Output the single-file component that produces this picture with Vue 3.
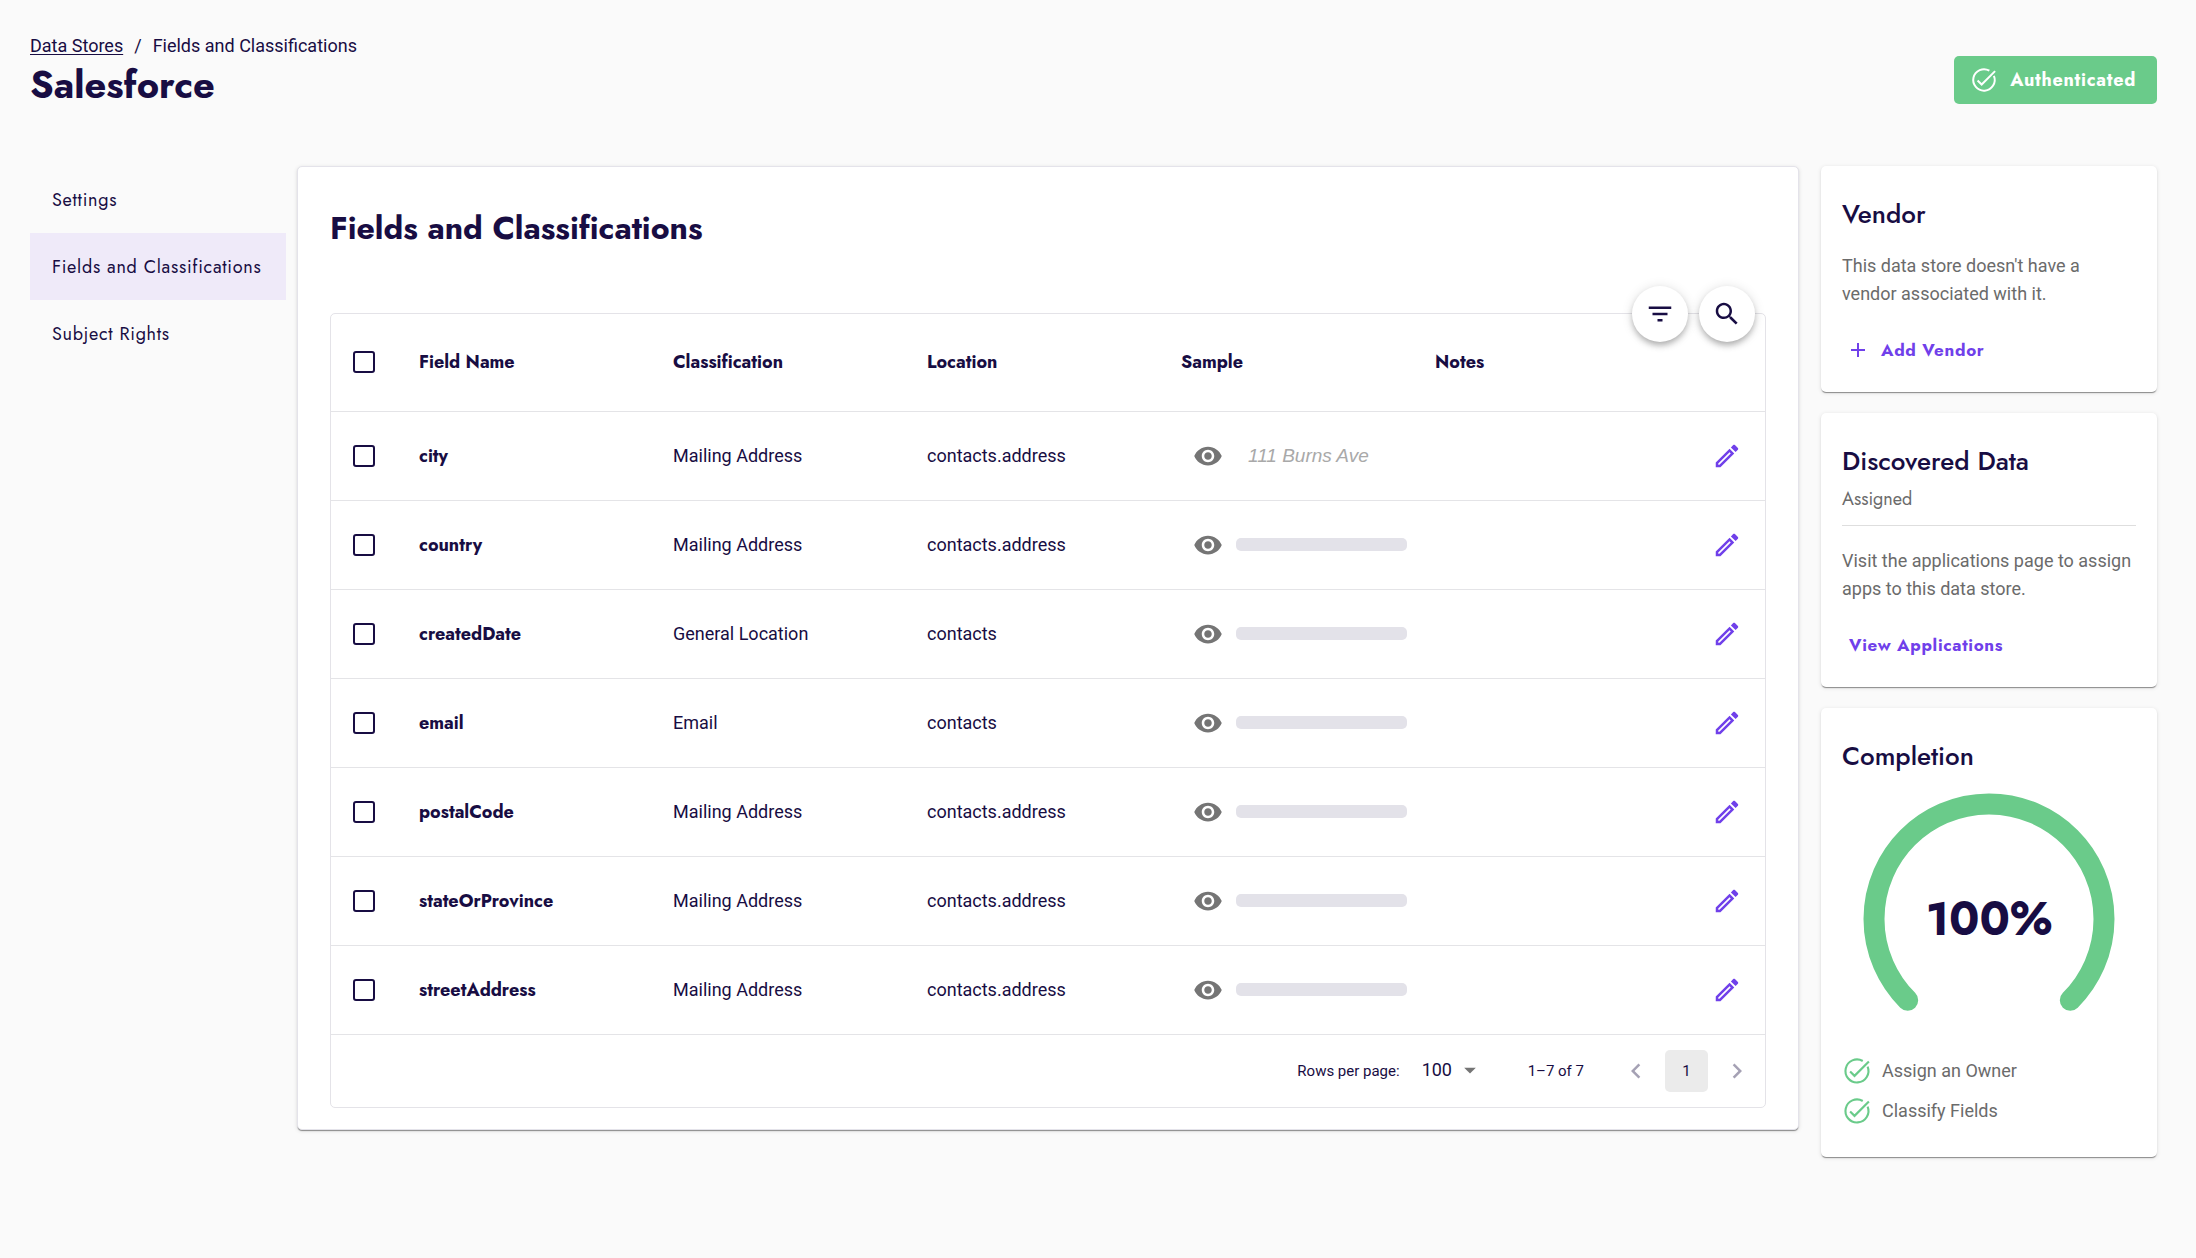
<script setup>
import { ref } from 'vue'

const navItems = ['Settings', 'Fields and Classifications', 'Subject Rights']
const activeItem = 'Fields and Classifications'
const columns = ['Field Name', 'Classification', 'Location', 'Sample', 'Notes']
const rows = ref([
  { name: 'city', classification: 'Mailing Address', location: 'contacts.address', sample: '111 Burns Ave' },
  { name: 'country', classification: 'Mailing Address', location: 'contacts.address' },
  { name: 'createdDate', classification: 'General Location', location: 'contacts' },
  { name: 'email', classification: 'Email', location: 'contacts' },
  { name: 'postalCode', classification: 'Mailing Address', location: 'contacts.address' },
  { name: 'stateOrProvince', classification: 'Mailing Address', location: 'contacts.address' },
  { name: 'streetAddress', classification: 'Mailing Address', location: 'contacts.address' }
])
const tasks = ['Assign an Owner', 'Classify Fields']
const pageSize = ref('100')

const icons = {
  done: 'M16.6 4A9.2 9.2 0 1 0 20.5 8.5M6.500 12.400L10 15.900L21.500 4.400',
  filter: 'M10 18h4v-2h-4v2zM3 6v2h18V6H3zm3 7h12v-2H6v2z',
  search: 'M15.5 14h-.79l-.28-.27C15.41 12.59 16 11.11 16 9.5 16 5.91 13.09 3 9.5 3S3 5.91 3 9.5 5.91 16 9.5 16c1.61 0 3.09-.59 4.23-1.57l.27.28v.79l5 4.99L20.49 19l-4.99-5zm-6 0C7.01 14 5 11.99 5 9.5S7.01 5 9.5 5 14 7.01 14 9.5 11.99 14 9.5 14z',
  eye: 'M12 4.5C7 4.5 2.73 7.61 1 12c1.73 4.39 6 7.5 11 7.5s9.27-3.11 11-7.5c-1.73-4.39-6-7.5-11-7.5zM12 17c-2.76 0-5-2.24-5-5s2.24-5 5-5 5 2.24 5 5-2.24 5-5 5zm0-8c-1.66 0-3 1.34-3 3s1.34 3 3 3 3-1.34 3-3-1.34-3-3-3z',
  edit: 'M3 17.25V21h3.75L17.81 9.94l-3.75-3.75L3 17.25zM5.92 19H5v-.92l9.06-9.06.92.92L5.92 19zM20.71 5.63l-2.34-2.34c-.2-.2-.45-.29-.71-.29s-.51.1-.7.29l-1.83 1.83 3.75 3.75 1.83-1.83c.39-.39.39-1.02 0-1.41z',
  plus: 'M19 13h-6v6h-2v-6H5v-2h6V5h2v6h6v2z',
  drop: 'M7 10l5 5 5-5z',
  prev: 'M15.41 7.41L14 6l-6 6 6 6 1.41-1.41L10.83 12z',
  next: 'M10 6L8.59 7.41 13.17 12l-4.58 4.59L10 18l6-6z'
}
</script>

<template>
  <div class="page">
    <header class="page-header">
      <div>
        <nav class="breadcrumb" aria-label="Breadcrumb">
          <a href="#">Data Stores</a><span class="slash">/</span><span>Fields and Classifications</span>
        </nav>
        <h1>Salesforce</h1>
      </div>
      <button class="auth" type="button">
        <svg class="done" viewBox="0 0 24 24"><path :d="icons.done" /></svg>
        Authenticated
      </button>
    </header>

    <div class="layout">
      <nav class="side-nav" aria-label="Data store">
        <a v-for="item in navItems" :key="item" href="#" :class="{ active: item === activeItem }">{{ item }}</a>
      </nav>

      <main class="panel">
        <h2>Fields and Classifications</h2>
        <div class="grid">
          <div class="fabs">
            <button type="button" aria-label="Filter"><svg viewBox="0 0 24 24"><path :d="icons.filter" /></svg></button>
            <button type="button" aria-label="Search"><svg viewBox="0 0 24 24"><path :d="icons.search" /></svg></button>
          </div>
          <table>
            <colgroup>
              <col class="col-check" />
              <col v-for="c in columns" :key="c" />
              <col class="col-edit" />
            </colgroup>
            <thead>
              <tr>
                <th><input type="checkbox" aria-label="Select all" /></th>
                <th v-for="c in columns" :key="c" scope="col">{{ c }}</th>
                <th></th>
              </tr>
            </thead>
            <tbody>
              <tr v-for="row in rows" :key="row.name">
                <td><input type="checkbox" :aria-label="'Select ' + row.name" /></td>
                <th scope="row">{{ row.name }}</th>
                <td>{{ row.classification }}</td>
                <td>{{ row.location }}</td>
                <td>
                  <div class="sample">
                    <button class="icon-button" type="button" aria-label="Show sample"><svg viewBox="0 0 24 24"><path :d="icons.eye" /></svg></button>
                    <em v-if="row.sample">{{ row.sample }}</em>
                    <span v-else class="mask"></span>
                  </div>
                </td>
                <td></td>
                <td class="edit-cell">
                  <button class="icon-button" type="button" aria-label="Edit"><svg viewBox="0 0 24 24"><path :d="icons.edit" /></svg></button>
                </td>
              </tr>
            </tbody>
          </table>
          <div class="pager">
            <label for="page-size">Rows per page:</label>
            <div class="select">
              <select id="page-size" v-model="pageSize"><option>100</option></select>
              <svg viewBox="0 0 24 24"><path :d="icons.drop" /></svg>
            </div>
            <span class="range">1–7 of 7</span>
            <button class="arrow" type="button" aria-label="Previous page"><svg viewBox="0 0 24 24"><path :d="icons.prev" /></svg></button>
            <button class="current" type="button">1</button>
            <button class="arrow" type="button" aria-label="Next page"><svg viewBox="0 0 24 24"><path :d="icons.next" /></svg></button>
          </div>
        </div>
      </main>

      <aside>
        <section class="card">
          <h3>Vendor</h3>
          <p>This data store doesn't have a vendor associated with it.</p>
          <button class="text-button with-icon" type="button">
            <svg viewBox="0 0 24 24"><path :d="icons.plus" /></svg>
            Add Vendor
          </button>
        </section>
        <section class="card">
          <h3 class="tight">Discovered Data</h3>
          <div class="subtitle">Assigned</div>
          <p>Visit the applications page to assign apps to this data store.</p>
          <a class="text-button" href="#">View Applications</a>
        </section>
        <section class="card completion">
          <h3 class="tight">Completion</h3>
          <div class="gauge">
            <svg viewBox="0 0 252 220">
              <path d="M44.700 207.300A115 115 0 1 1 207.300 207.300" />
            </svg>
            <strong>100%</strong>
          </div>
          <ul>
            <li v-for="task in tasks" :key="task">
              <svg class="done" viewBox="0 0 24 24"><path :d="icons.done" /></svg>{{ task }}
            </li>
          </ul>
        </section>
      </aside>
    </div>
  </div>
</template>

<style>
body {
  background: #fafafa;
}
</style>

<style scoped>
* {
  box-sizing: border-box;
}
.page {
  padding: 32px 39px 32px 30px;
  color: #180d43;
  font: 18px/28px Roboto, sans-serif;
}
h1, h2, h3, p, ul {
  margin: 0;
  padding: 0;
}
h1, h2, h3, th, .side-nav, .subtitle, .gauge {
  font-family: Jost, Lato, sans-serif;
}
svg {
  display: block;
  fill: currentColor;
  flex: none;
}
.done {
  fill: none;
  stroke: currentColor;
  stroke-width: 1.7;
}
button {
  border: 0;
  padding: 0;
  background: none;
  color: inherit;
  font: inherit;
}
.page-header {
  display: flex;
  justify-content: space-between;
  align-items: flex-start;
  height: 134px;
}
.breadcrumb a {
  color: inherit;
  text-underline-offset: 2px;
}
.slash {
  margin: 0 11px;
}
h1 {
  font-size: 38px;
  line-height: 50px;
}
.auth {
  display: flex;
  align-items: center;
  gap: 12px;
  height: 48px;
  margin-top: 24px;
  padding: 0 21px 0 16px;
  border-radius: 5px;
  background: #6acb8a;
  color: #fff;
  font-family: Jost, Lato, sans-serif;
  font-size: 18px;
  font-weight: 700;
  letter-spacing: 0.04em;
}
.auth svg {
  width: 28px;
  height: 28px;
}
.layout {
  display: flex;
  align-items: flex-start;
}
.side-nav {
  flex: none;
  width: 256px;
  margin-right: 11px;
  letter-spacing: 0.04em;
}
.side-nav a {
  display: flex;
  align-items: center;
  height: 67px;
  padding-left: 22px;
  color: inherit;
  text-decoration: none;
}
.side-nav a.active {
  background: #efeaf9;
}
.panel {
  flex: 1;
  min-width: 0;
  padding: 41px 32px 21px;
  border: 1px solid #e4e3ea;
  border-radius: 5px;
  background: #fff;
  box-shadow: 0 2px 1px -1px rgba(0, 0, 0, .3), 0 1px 1px rgba(0, 0, 0, .14), 0 1px 4px rgba(0, 0, 0, .12);
}
h2 {
  font-size: 32px;
  line-height: 40px;
  margin-bottom: 65px;
}
.grid {
  position: relative;
  border: 1px solid #e4e3e8;
  border-radius: 5px;
}
.fabs {
  position: absolute;
  top: -28px;
  right: 10px;
  display: flex;
  gap: 11px;
}
.fabs button {
  display: grid;
  place-items: center;
  width: 56px;
  height: 56px;
  border-radius: 50%;
  background: #fff;
  box-shadow: 0 4px 6px -1px rgba(0, 0, 0, .28), 0 1px 12px rgba(0, 0, 0, .12);
}
.icon-button {
  display: block;
}
.fabs svg,
.icon-button svg {
  width: 30px;
  height: 30px;
}
table {
  width: 100%;
  table-layout: fixed;
  border-collapse: collapse;
}
.col-check {
  width: 66px;
}
.col-edit {
  width: 98px;
}
th, td {
  height: 89px;
  padding: 0 0 0 22px;
  border-bottom: 1px solid #e4e4e7;
  text-align: left;
  vertical-align: middle;
}
thead th {
  height: 97px;
}
input[type='checkbox'] {
  display: block;
  appearance: none;
  width: 22px;
  height: 22px;
  margin: 0;
  border: 2px solid #180d43;
  border-radius: 3px;
}
.sample {
  display: flex;
  align-items: center;
  padding-left: 12px;
}
.sample .icon-button {
  margin-right: 13px;
  color: #757575;
}
.sample em {
  margin-left: 12px;
  color: #a9a9a9;
  font-family: 'Liberation Sans', Arial, sans-serif;
  font-size: 19px;
}
.mask {
  width: 171px;
  height: 13px;
  border-radius: 5px;
  background: #e3e2e9;
}
.edit-cell {
  padding-left: 45px;
  color: #7040ea;
}
.pager {
  display: flex;
  justify-content: flex-end;
  align-items: center;
  height: 72px;
  padding-right: 13px;
  font-size: 15px;
}
.select {
  position: relative;
  margin-left: 22px;
}
.select select {
  appearance: none;
  width: 62px;
  padding: 0;
  border: 0;
  background: none;
  color: inherit;
  font: 18px/28px Roboto, sans-serif;
}
.select svg {
  position: absolute;
  top: 0;
  right: 0;
  width: 28px;
  height: 28px;
  color: #757575;
  pointer-events: none;
}
.range {
  margin: 0 37px 0 44px;
}
.arrow {
  width: 30px;
  color: #a5a1b4;
}
.arrow svg {
  width: 30px;
  height: 30px;
}
.current {
  width: 43px;
  height: 42px;
  margin: 0 14px;
  border-radius: 5px;
  background: #ebebeb;
}
aside {
  display: grid;
  flex: none;
  gap: 21px;
  width: 336px;
  margin-left: 22px;
}
.card {
  padding: 28px 21px;
  border-radius: 5px;
  background: #fff;
  color: #6b6b6b;
  box-shadow: 0 2px 1px -1px rgba(0, 0, 0, .3), 0 1px 1px rgba(0, 0, 0, .14), 0 1px 4px rgba(0, 0, 0, .12);
}
.completion {
  padding-bottom: 32px;
}
h3 {
  margin-bottom: 18px;
  color: #180d43;
  font-size: 26px;
  font-weight: 500;
  line-height: 40px;
}
h3.tight {
  margin-bottom: 0;
}
.subtitle {
  margin-bottom: 21px;
  padding-bottom: 8px;
  border-bottom: 1px solid #dedede;
  line-height: 36px;
}
.text-button {
  display: flex;
  align-items: center;
  height: 28px;
  margin: 28px 0 0 7px;
  color: #7040ea;
  font-family: Jost, Lato, sans-serif;
  font-size: 17px;
  font-weight: 700;
  letter-spacing: 0.04em;
  text-decoration: none;
}
.with-icon {
  gap: 11px;
  margin-left: 4px;
}
.with-icon svg {
  width: 24px;
  height: 24px;
}
.gauge {
  position: relative;
  display: grid;
  justify-items: center;
  margin-top: 17px;
}
.gauge svg {
  width: 252px;
  height: 220px;
  fill: none;
  stroke: #6acb8a;
  stroke-width: 21;
  stroke-linecap: round;
}
.gauge strong {
  position: absolute;
  top: 98px;
  color: #180d43;
  font-size: 46px;
  line-height: 56px;
}
ul {
  display: grid;
  gap: 12px;
  margin-top: 44px;
  list-style: none;
}
li {
  display: flex;
  align-items: center;
  gap: 10px;
}
li svg {
  width: 30px;
  height: 30px;
  margin: -1px 0;
  color: #6acb8a;
}
</style>
